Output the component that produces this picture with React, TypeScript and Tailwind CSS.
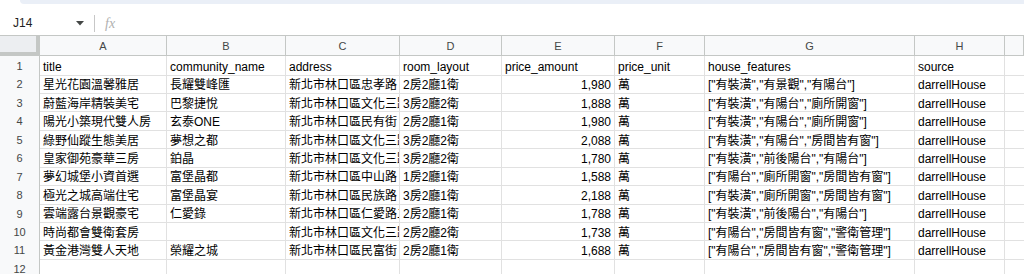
import React from 'react';

const COLS = ['A', 'B', 'C', 'D', 'E', 'F', 'G', 'H', ''];

const ROWS: string[][] = [
  ['title', 'community_name', 'address', 'room_layout', 'price_amount', 'price_unit', 'house_features', 'source'],
  ['星光花園溫馨雅居', '長耀雙峰匯', '新北市林口區忠孝路', '2房2廳1衛', '1,980', '萬', '["有裝潢","有景觀","有陽台"]', 'darrellHouse'],
  ['蔚藍海岸精裝美宅', '巴黎捷悅', '新北市林口區文化三路一段', '3房2廳2衛', '1,888', '萬', '["有裝潢","有陽台","廁所開窗"]', 'darrellHouse'],
  ['陽光小築現代雙人房', '玄泰ONE', '新北市林口區民有街', '2房2廳1衛', '1,980', '萬', '["有裝潢","有陽台","廁所開窗"]', 'darrellHouse'],
  ['綠野仙蹤生態美居', '夢想之都', '新北市林口區文化三路二段', '3房2廳2衛', '2,088', '萬', '["有裝潢","有陽台","房間皆有窗"]', 'darrellHouse'],
  ['皇家御苑豪華三房', '鉑晶', '新北市林口區文化三路一段', '3房2廳2衛', '1,780', '萬', '["有裝潢","前後陽台","有陽台"]', 'darrellHouse'],
  ['夢幻城堡小資首選', '富堡晶都', '新北市林口區中山路', '1房2廳1衛', '1,588', '萬', '["有陽台","廁所開窗","房間皆有窗"]', 'darrellHouse'],
  ['極光之城高端住宅', '富堡晶宴', '新北市林口區民族路', '3房2廳1衛', '2,188', '萬', '["有裝潢","廁所開窗","房間皆有窗"]', 'darrellHouse'],
  ['雲端露台景觀豪宅', '仁愛錄', '新北市林口區仁愛路二段', '2房2廳1衛', '1,788', '萬', '["有裝潢","前後陽台","有陽台"]', 'darrellHouse'],
  ['時尚都會雙衛套房', '', '新北市林口區文化三路二段', '2房2廳2衛', '1,738', '萬', '["有陽台","房間皆有窗","警衛管理"]', 'darrellHouse'],
  ['黃金港灣雙人天地', '榮耀之城', '新北市林口區民富街', '2房2廳1衛', '1,688', '萬', '["有陽台","房間皆有窗","警衛管理"]', 'darrellHouse'],
  ['', '', '', '', '', '', '', ''],
];

const gridCols = 'grid grid-cols-[40px_127px_119px_114px_102px_113px_90px_210px_90px_1fr]';

const App: React.FC = () => {
  return (
    <div className="w-[1024px] h-[274px] overflow-hidden bg-white font-['Liberation_Sans','Noto_Sans_CJK_TC',sans-serif] text-black">
      {/* toolbar edge */}
      <div className="h-[4px] ml-[20px] bg-[#eaeff7] rounded-bl-[4px]"></div>

      {/* name box / formula bar */}
      <div className="h-[31px] flex items-center pt-[7px]">
        <span className="pl-[13px] w-[76px] text-[12px] text-[#1f1f1f]">J14</span>
        <svg width="8" height="5" viewBox="0 0 8 5">
          <path d="M0 0 L8 0 L4 4.5 Z" fill="#444746" />
        </svg>
        <div className="ml-[10px] w-px h-[17px] bg-[#c7c7c7]"></div>
        <span className="ml-[10px] text-[14px] italic text-[#b0b0b0] font-['Liberation_Serif',serif]">fx</span>
      </div>

      {/* column headers */}
      <div className={`${gridCols} h-[21px] border-t border-[#c4c7c5] bg-[#f8f9fa]`}>
        <div className="bg-[#eceef1] border-r-[4px] border-b-[4px] border-[#c4c7c5]"></div>
        {COLS.map((c, i) => (
          <div
            key={i}
            className="flex items-center justify-center border-r border-b border-[#c4c7c5] pt-[1px] text-[11px] text-[#444746]"
          >
            {c}
          </div>
        ))}
      </div>

      {/* rows */}
      {ROWS.map((row, r) => (
        <div key={r} className={`${gridCols} h-[18.45px]`}>
          <div className="flex items-center justify-center bg-[#f8f9fa] border-r border-b border-[#c4c7c5] pt-[2px] text-[11px] text-[#444746]">
            {r + 1}
          </div>
          {row.map((v, c) => (
            <div
              key={c}
              className={`flex items-center overflow-hidden whitespace-nowrap border-r border-b border-[#e1e1e1] px-[3px] pt-[3px] text-[12px] leading-none ${
                c === 4 && r > 0 ? 'justify-end' : ''
              }`}
            >
              {v}
            </div>
          ))}
          <div className="border-b border-[#e1e1e1]"></div>
        </div>
      ))}
    </div>
  );
};

export default App;
